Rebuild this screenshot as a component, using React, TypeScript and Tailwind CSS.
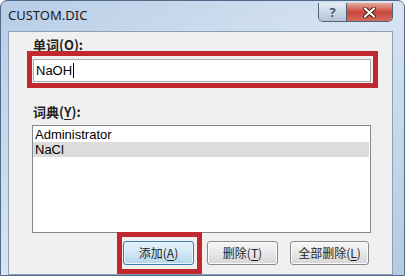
import React from "react";

const cjk = "font-['Noto_Sans_CJK_SC','Noto_Sans',sans-serif]";
const latin = "font-['Liberation_Sans','Noto_Sans_CJK_SC',sans-serif]";

const Key = ({ k }: { k: string }) => <span className="underline underline-offset-2">{k}</span>;

const PushButton = ({ label, k, w, active }: { label: string; k: string; w: string; active?: boolean }) => (
  <button
    className={`${w} h-[24px] rounded-[3px] border text-[12px] leading-none text-[#1e1e1e] ${cjk} ${
      active
        ? "border-[#3c7fb1] bg-gradient-to-b from-[#e5f1f9] via-[#d2e7f4] to-[#b4d5ea] shadow-[inset_0_0_0_1px_#e8f4fb]"
        : "border-[#8a8a8a] bg-gradient-to-b from-[#f6f6f6] via-[#e8e8e8] to-[#d6d6d6] shadow-[inset_0_0_0_1px_#fbfbfb]"
    }`}
  >
    {label}(<Key k={k} />)
  </button>
);

export default function App() {
  return (
    <div className="w-[405px] h-[276px] overflow-hidden rounded-t-[7px] border border-[#53698a] bg-gradient-to-br from-[#b7cde6] via-[#d7e4f1] to-[#b4c9e0] flex flex-col">
      {/* title bar */}
      <div className="h-[30px] flex items-start shrink-0">
        <div className="pl-[7px] pt-[6px] text-[13px] leading-[16px] text-[#1b1b1b] font-['Noto_Sans',sans-serif] flex-1">
          CUSTOM.DIC
        </div>
        <div className="flex mr-[11px] mt-[2px] h-[19px] rounded-b-[5px] border border-t-0 border-[#51637c] overflow-hidden">
          <div className="w-[28px] flex items-center justify-center border-r border-[#51637c] bg-gradient-to-b from-[#e7eef6] via-[#cbd8e6] to-[#b4c4d6] text-[13px] font-bold text-[#4a5668] leading-none font-['Noto_Sans',sans-serif]">
            ?
          </div>
          <div className="w-[45px] flex items-center justify-center bg-gradient-to-b from-[#e9a89e] via-[#c7453a] to-[#d66b5d]">
            <svg width="13" height="11" viewBox="0 0 13 11">
              <path d="M2 1.5 L11 9.5 M11 1.5 L2 9.5" stroke="#4a1a16" strokeWidth="4" strokeLinecap="round" />
              <path d="M2 1.5 L11 9.5 M11 1.5 L2 9.5" stroke="#ffffff" strokeWidth="2.2" strokeLinecap="round" />
            </svg>
          </div>
        </div>
      </div>

      {/* client area */}
      <div className="flex-1 ml-[7px] mr-[11px] border border-[#8ba0b8] bg-[#f0f0f0] pl-[18px] pr-[14px] pt-[6px] flex flex-col">
        <div className={`text-[13px] leading-[14px] font-bold text-[#222] ml-[6px] ${cjk}`}>
          单词(<Key k="O" />):
        </div>
        <div className="mt-[-1px] border-[5px] border-[#c1272d] pt-[3px] pb-[1px] pl-[1px] pr-[2px]">
          <div className={`h-[23px] border border-[#abadb3] bg-white pl-[2px] flex items-center text-[13px] text-black ${latin}`}>
            NaOH
            <span className="ml-[1px] w-[1px] h-[15px] bg-black" />
          </div>
        </div>

        <div className={`mt-[17px] text-[13px] leading-[14px] font-bold text-[#222] ml-[6px] ${cjk}`}>
          词典(<Key k="Y" />):
        </div>
        <div className={`mt-[6px] ml-[5px] mr-[7px] h-[108px] border border-[#828790] bg-white pt-[1px] text-[13px] leading-[15px] text-black ${latin}`}>
          <div className="pl-[2px]">Administrator</div>
          <div className="pl-[2px] bg-[#dcdcdc] mr-[1px]">NaCl</div>
        </div>

        <div className="mt-[-1px] flex justify-end items-start mr-[9px]">
          <div className="border-[5px] border-[#c1272d] pt-[3px] pb-[4px] pl-[1px] pr-[3px]">
            <PushButton label="添加" k="A" w="w-[71px]" active />
          </div>
          <div className="ml-[5px] mt-[8px]">
            <PushButton label="删除" k="T" w="w-[71px]" />
          </div>
          <div className="ml-[12px] mt-[8px]">
            <PushButton label="全部删除" k="L" w="w-[79px]" />
          </div>
        </div>
      </div>
    </div>
  );
}
